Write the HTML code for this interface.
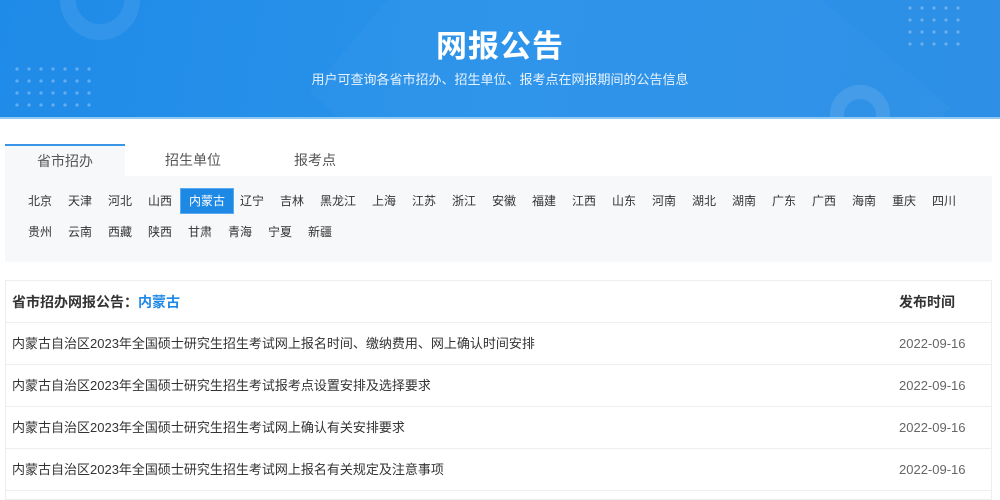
<!DOCTYPE html><html><head><meta charset="utf-8"><style>
*{margin:0;padding:0;box-sizing:border-box}
body{width:1000px;height:493px;overflow:hidden;background:#fff;font-family:"Liberation Sans","Noto Sans CJK SC",sans-serif;position:relative}
.ban{position:absolute;left:0;top:0;width:1000px;height:119px;background:linear-gradient(100deg,#1f8be8 0%,#2a93ea 50%,#2d8fe6 100%);overflow:hidden;border-bottom:2px solid #8fcaf5}
.ban h1{position:absolute;top:21px;width:100%;text-align:center;color:#fff;font-size:31px;font-weight:bold;letter-spacing:1px}
.ban p{position:absolute;top:69px;width:100%;text-align:center;color:#e8f3ff;font-size:13px}
.tabs{position:absolute;top:144px;left:5px;height:32px}
.tab{position:absolute;top:0;height:32px;line-height:32px;font-size:14px;color:#555;text-align:center;width:120px}
.panel{position:absolute;left:5px;top:176px;width:987px;height:86px;background:#f6f8fa}
.it{position:absolute;font-size:12px;color:#333;height:26px;line-height:26px;padding:0 8px;white-space:nowrap}
.it.on{background:#1e88e5;color:#fff;border:1px solid #5aaaf0;line-height:24px}
.tbl{position:absolute;left:5px;top:280px;width:987px;height:220px;border:1px solid #eceef0}
.row{position:absolute;left:0;width:985px;height:42px;border-bottom:1px solid #eceef0;font-size:13px;color:#333;line-height:42px}
.row .t{position:absolute;left:6px}.row .d{position:absolute;left:893px;color:#666}
</style></head><body>
<div class="ban">
<div style="position:absolute;left:60px;top:-40px;width:80px;height:80px;border:16px solid rgba(255,255,255,.08);border-radius:50%"></div>
<div style="position:absolute;left:830px;top:85px;width:60px;height:60px;border:14px solid rgba(255,255,255,.1);border-radius:50%"></div>
<div style="position:absolute;left:380px;top:-100px;width:500px;height:400px;background:rgba(255,255,255,.025);transform:rotate(40deg)"></div>
<svg style="position:absolute;left:12px;top:66px" width="90" height="44"><g fill="rgba(255,255,255,.3)">
<circle cx="5" cy="3" r="1.6"/><circle cx="17" cy="3" r="1.6"/><circle cx="29" cy="3" r="1.6"/><circle cx="41" cy="3" r="1.6"/><circle cx="53" cy="3" r="1.6"/><circle cx="65" cy="3" r="1.6"/><circle cx="77" cy="3" r="1.6"/>
<circle cx="5" cy="15" r="1.6"/><circle cx="17" cy="15" r="1.6"/><circle cx="29" cy="15" r="1.6"/><circle cx="41" cy="15" r="1.6"/><circle cx="53" cy="15" r="1.6"/><circle cx="65" cy="15" r="1.6"/><circle cx="77" cy="15" r="1.6"/>
<circle cx="5" cy="27" r="1.6"/><circle cx="17" cy="27" r="1.6"/><circle cx="29" cy="27" r="1.6"/><circle cx="41" cy="27" r="1.6"/><circle cx="53" cy="27" r="1.6"/><circle cx="65" cy="27" r="1.6"/><circle cx="77" cy="27" r="1.6"/>
<circle cx="5" cy="39" r="1.6"/><circle cx="17" cy="39" r="1.6"/><circle cx="29" cy="39" r="1.6"/><circle cx="41" cy="39" r="1.6"/><circle cx="53" cy="39" r="1.6"/><circle cx="65" cy="39" r="1.6"/><circle cx="77" cy="39" r="1.6"/></g></svg>
<svg style="position:absolute;left:905px;top:5px" width="90" height="44"><g fill="rgba(255,255,255,.3)">
<circle cx="5" cy="3" r="1.6"/><circle cx="17" cy="3" r="1.6"/><circle cx="29" cy="3" r="1.6"/><circle cx="41" cy="3" r="1.6"/><circle cx="53" cy="3" r="1.6"/>
<circle cx="5" cy="15" r="1.6"/><circle cx="17" cy="15" r="1.6"/><circle cx="29" cy="15" r="1.6"/><circle cx="41" cy="15" r="1.6"/><circle cx="53" cy="15" r="1.6"/>
<circle cx="5" cy="27" r="1.6"/><circle cx="17" cy="27" r="1.6"/><circle cx="29" cy="27" r="1.6"/><circle cx="41" cy="27" r="1.6"/><circle cx="53" cy="27" r="1.6"/>
<circle cx="5" cy="39" r="1.6"/><circle cx="17" cy="39" r="1.6"/><circle cx="29" cy="39" r="1.6"/><circle cx="41" cy="39" r="1.6"/><circle cx="53" cy="39" r="1.6"/></g></svg>
<h1>网报公告</h1><p>用户可查询各省市招办、招生单位、报考点在网报期间的公告信息</p></div>
<div class="tabs">
<div class="tab" style="left:0;background:#f6f8fa;border-top:2px solid #3a95e6;line-height:30px">省市招办</div>
<div class="tab" style="left:128px">招生单位</div>
<div class="tab" style="left:250px">报考点</div></div>
<div class="panel"></div>
<div id="items"></div>
<div class="tbl">
<div class="row" style="top:0;height:42px;font-weight:bold;font-size:14px"><span class="t">省市招办网报公告：<span style="color:#1e88e5">内蒙古</span></span><span class="d" style="color:#333">发布时间</span></div>
<div class="row" style="top:42px"><span class="t">内蒙古自治区2023年全国硕士研究生招生考试网上报名时间、缴纳费用、网上确认时间安排</span><span class="d">2022-09-16</span></div>
<div class="row" style="top:84px"><span class="t">内蒙古自治区2023年全国硕士研究生招生考试报考点设置安排及选择要求</span><span class="d">2022-09-16</span></div>
<div class="row" style="top:126px"><span class="t">内蒙古自治区2023年全国硕士研究生招生考试网上确认有关安排要求</span><span class="d">2022-09-16</span></div>
<div class="row" style="top:168px"><span class="t">内蒙古自治区2023年全国硕士研究生招生考试网上报名有关规定及注意事项</span><span class="d">2022-09-16</span></div>
</div>
<script>
var r1="北京 天津 河北 山西 内蒙古 辽宁 吉林 黑龙江 上海 江苏 浙江 安徽 福建 江西 山东 河南 湖北 湖南 广东 广西 海南 重庆 四川".split(" ");
var r2="贵州 云南 西藏 陕西 甘肃 青海 宁夏 新疆".split(" ");
var h="";
function row(a,y){var x=20;a.forEach(function(n){h+='<div class="it'+(n=="内蒙古"?' on':'')+'" style="left:'+x+'px;top:'+y+'px">'+n+'</div>';x+=n.length*12+16;});}
row(r1,188);row(r2,219);
document.getElementById("items").innerHTML=h;
</script>
</body></html>
